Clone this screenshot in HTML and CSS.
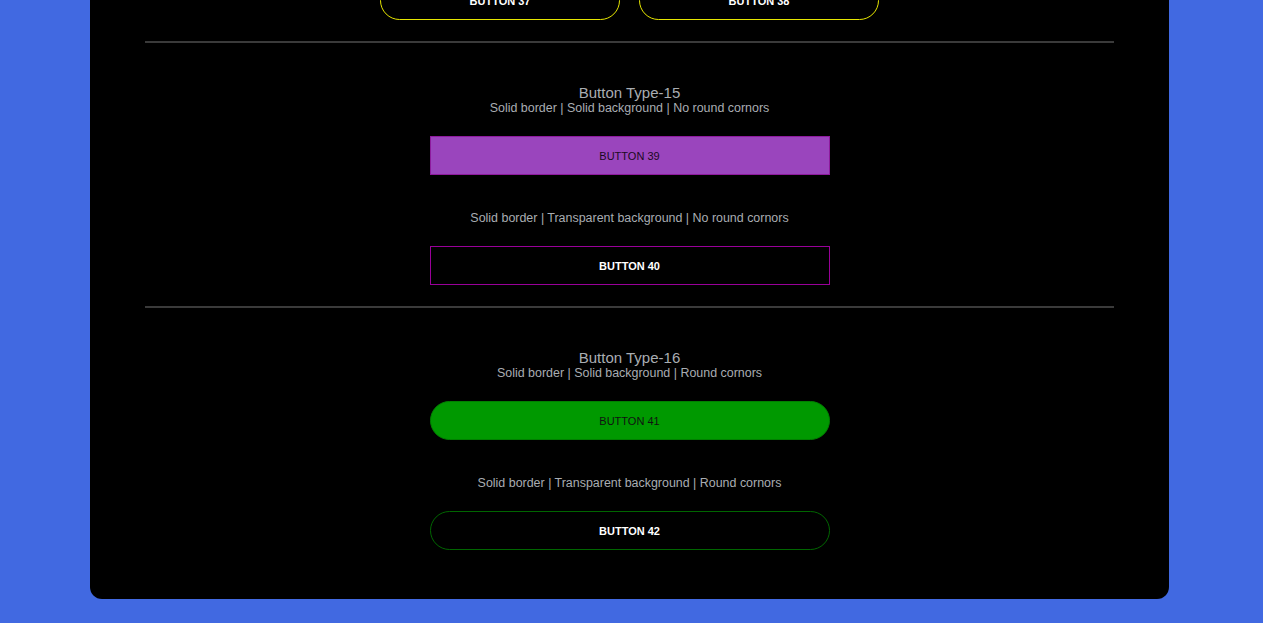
FILE: index.html
```html
<!DOCTYPE html>
<html lang="en">
<head>
<meta charset="utf-8">
<title>Buttons</title>
<link rel="stylesheet" href="styles.css">
</head>
<body>
<div class="page">
  <main class="card">
    <div class="row">
      <button class="btn btn-yellow">BUTTON 37</button>
      <button class="btn btn-yellow">BUTTON 38</button>
    </div>
    <hr class="divider">
    <section class="section">
      <h2 class="title">Button Type-15</h2>
      <p class="sub">Solid border | Solid background | No round cornors</p>
      <button class="btn btn-wide btn-purple-solid">BUTTON 39</button>
      <p class="sub sub-gap">Solid border | Transparent background | No round cornors</p>
      <button class="btn btn-wide btn-purple-outline">BUTTON 40</button>
    </section>
    <hr class="divider">
    <section class="section">
      <h2 class="title">Button Type-16</h2>
      <p class="sub">Solid border | Solid background | Round cornors</p>
      <button class="btn btn-wide btn-green-solid">BUTTON 41</button>
      <p class="sub sub-gap">Solid border | Transparent background | Round cornors</p>
      <button class="btn btn-wide btn-green-outline">BUTTON 42</button>
    </section>
  </main>
</div>
</body>
</html>
```
FILE: styles.css
```css
html, body {
  margin: 0;
  padding: 0;
  background: #4169e1;
  font-family: "Liberation Sans", Arial, sans-serif;
  overflow: hidden;
}
.page {
  padding: 0 94px 24px 90px;
}
.card {
  background: #000;
  border-radius: 0 0 12px 12px;
  margin-top: -60px;
  padding: 41px 55px 49px 55px;
  display: flex;
  flex-direction: column;
  align-items: stretch;
}
.row {
  display: flex;
  justify-content: center;
  gap: 19px;
}
.btn {
  box-sizing: border-box;
  height: 39px;
  font-family: "Liberation Sans", Arial, sans-serif;
  font-size: 11px;
  cursor: pointer;
  padding: 0;
}
.btn-yellow {
  width: 240px;
  border: 1px solid #e6e600;
  border-radius: 20px;
  background: #000;
  color: #fff;
  font-weight: bold;
}
.divider {
  border: 0;
  height: 2px;
  background: #3a3a3a;
  margin: 21px 0 0 0;
}
.section {
  display: flex;
  flex-direction: column;
  align-items: center;
  padding: 41px 0 0 0;
}
.section + .divider {
  margin-top: 21px;
}
.title {
  margin: 0;
  font-size: 15px;
  line-height: 17px;
  font-weight: normal;
  color: #a9adb2;
}
.sub {
  margin: 0 0 21px 0;
  font-size: 12.45px;
  line-height: 14px;
  color: #a9adb2;
}
.sub-gap {
  margin-top: 36px;
}
.btn-wide {
  width: 400px;
}
.btn-purple-solid {
  background: #9a45bd;
  border: 1px solid #8e1a9e;
  color: #1a0a22;
}
.btn-purple-outline {
  background: transparent;
  border: 1px solid #990099;
  color: #fff;
  font-weight: bold;
}
.btn-green-solid {
  background: #009900;
  border: 1px solid #008000;
  border-radius: 20px;
  color: #111;
}
.btn-green-outline {
  background: transparent;
  border: 1px solid #006600;
  border-radius: 20px;
  color: #fff;
  font-weight: bold;
}
```
